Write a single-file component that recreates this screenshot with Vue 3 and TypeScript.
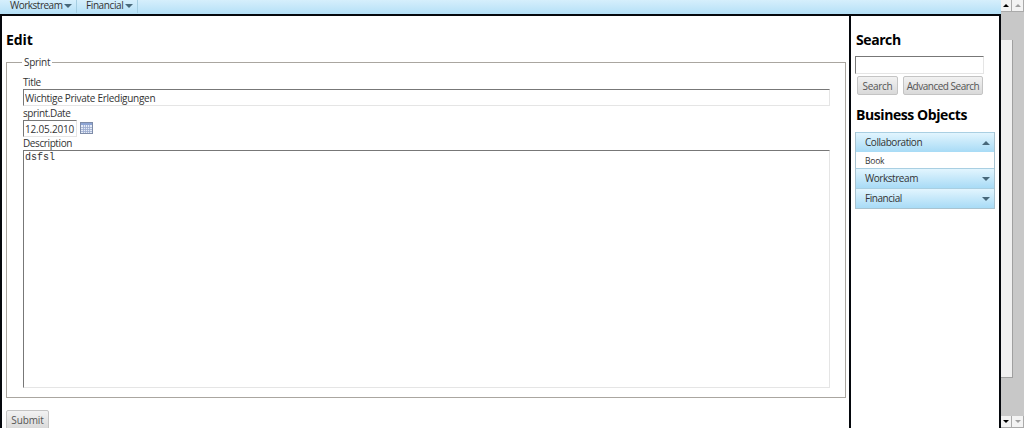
<script setup lang="ts">
import { ref } from 'vue'

interface MenuGroup {
  label: string
  open: boolean
  items: string[]
}

const menu = ['Workstream', 'Financial']

const title = ref('Wichtige Private Erledigungen')
const date = ref('12.05.2010')
const description = ref('dsfsl')
const query = ref('')

const groups = ref<MenuGroup[]>([
  { label: 'Collaboration', open: true, items: ['Book'] },
  { label: 'Workstream', open: false, items: [] },
  { label: 'Financial', open: false, items: [] },
])

function toggle(group: MenuGroup) {
  group.open = !group.open
}
</script>

<template>
  <div class="page">
    <div class="frame">
      <nav class="menubar">
        <a v-for="entry in menu" :key="entry" class="menubar__item">
          <span>{{ entry }}</span>
          <i class="arrow"></i>
        </a>
      </nav>

      <div class="columns">
        <main class="content">
          <h1>Edit</h1>
          <form @submit.prevent>
            <fieldset>
              <legend>Sprint</legend>
              <label for="title">Title</label>
              <input id="title" v-model="title" class="field field--title" type="text" />
              <label for="date" class="label--date">sprint.Date</label>
              <div class="date-row">
                <input id="date" v-model="date" class="field field--date" type="text" />
                <svg class="calendar" width="13" height="12" viewBox="0 0 13 12">
                  <rect x="0.5" y="0.5" width="12" height="11" fill="#e6ecf7" stroke="#7e8ca8" />
                  <rect x="1" y="1" width="11" height="2" fill="#8ea5d4" />
                  <path
                    d="M1 5.5H12M1 7.5H12M1 9.5H12M3.5 3V11M5.5 3V11M7.5 3V11M9.5 3V11"
                    fill="none"
                    stroke="#9aabce"
                    stroke-width="0.8"
                  />
                </svg>
              </div>
              <label for="description" class="label--description">Description</label>
              <textarea id="description" v-model="description" class="field field--text"></textarea>
            </fieldset>
            <button class="button button--submit" type="submit">Submit</button>
          </form>
        </main>

        <aside class="sidebar">
          <h1>Search</h1>
          <input v-model="query" class="field field--search" type="text" />
          <div class="buttons">
            <button class="button button--search" type="button">Search</button>
            <button class="button button--advanced" type="button">Advanced Search</button>
          </div>
          <h1 class="heading--objects">Business Objects</h1>
          <div class="accordion">
            <template v-for="group in groups" :key="group.label">
              <div class="accordion__head" @click="toggle(group)">
                <span>{{ group.label }}</span>
                <i class="arrow" :class="{ 'arrow--up': group.open }"></i>
              </div>
              <template v-if="group.open">
                <div v-for="item in group.items" :key="item" class="accordion__item">{{ item }}</div>
              </template>
            </template>
          </div>
        </aside>
      </div>
    </div>

    <div class="scrollbar scrollbar--inner">
      <div class="scrollbar__button"><i class="tick tick--up"></i></div>
      <div class="scrollbar__track"><div class="scrollbar__thumb"></div></div>
      <div class="scrollbar__button"><i class="tick tick--down"></i></div>
    </div>
    <div class="scrollbar scrollbar--outer">
      <div class="scrollbar__button"><i class="tick tick--up tick--off"></i></div>
      <div class="scrollbar__track"></div>
      <div class="scrollbar__button"><i class="tick tick--down tick--off"></i></div>
    </div>
  </div>
</template>

<style>
body {
  margin: 0;
  overflow: hidden;
}
</style>

<style scoped>
.page,
.page * {
  box-sizing: border-box;
}

.page {
  display: flex;
  width: 1024px;
  height: 428px;
  overflow: hidden;
  background: #fff;
  color: #333;
  font-family: 'Open Sans', 'Noto Sans', sans-serif;
  font-size: 10px;
  letter-spacing: -0.29px;
  line-height: 12px;
}

.frame {
  display: flex;
  flex-direction: column;
  width: 1001px;
}

.menubar {
  display: flex;
  flex: none;
  height: 14px;
  background: linear-gradient(#d6effc, #b4e0f7);
  letter-spacing: -0.5px;
}

.menubar__item {
  display: flex;
  justify-content: space-between;
  height: 13px;
  padding: 0 4px 0 9px;
  border-right: 1px solid #a5cee2;
  line-height: 10px;
}

.menubar__item:nth-child(1) {
  width: 77px;
  padding-left: 10px;
}

.menubar__item:nth-child(2) {
  width: 61px;
  padding-left: 9px;
  letter-spacing: -0.4px;
}

.menubar .arrow {
  margin-top: 4px;
}

.arrow {
  width: 0;
  height: 0;
  border: solid transparent;
  border-width: 4px 4px 0;
  border-top-color: #48687a;
}

.arrow--up {
  border-width: 0 4px 4px;
  border-bottom-color: #48687a;
}

.columns {
  display: flex;
  flex: 1;
  min-height: 0;
  border: solid #05080d;
  border-width: 2px 2px 0;
}

.content {
  width: 847px;
  padding: 16px 4px 0;
}

h1 {
  margin: 0;
  color: #000;
  font-size: 14px;
  font-weight: 700;
  letter-spacing: -0.42px;
  line-height: 16px;
  white-space: nowrap;
}

.content h1 {
  letter-spacing: -0.1px;
}

fieldset {
  display: flow-root;
  width: 839px;
  height: 343px;
  margin: 7px 0 0;
  padding: 8px 15px 0 16px;
  border: 1px solid #aaa6a0;
}

legend {
  height: 14px;
  margin-left: -1px;
  padding: 0 2px;
  line-height: 15px;
}

label {
  display: block;
  height: 12px;
  line-height: 10px;
  letter-spacing: -0.4px;
}

.field {
  display: block;
  margin: 0;
  padding: 0 1px;
  border: 1px solid;
  border-color: #777 #e5e5e5 #e5e5e5 #777;
  border-radius: 0;
  outline: none;
  background: #fff;
  color: #333;
  font: inherit;
  letter-spacing: inherit;
}

.field--title {
  width: 807px;
  height: 17px;
}

.label--date {
  margin-top: 2px;
}

.date-row {
  display: flex;
  align-items: center;
  gap: 3px;
  height: 17px;
}

.field--date {
  width: 54px;
  height: 17px;
  letter-spacing: -0.2px;
}

.calendar {
  position: relative;
  top: -1px;
}

.label--description {
  margin-top: 1px;
}

.field--text {
  width: 807px;
  height: 238px;
  padding-top: 1px;
  font-family: 'Liberation Mono', monospace;
  font-size: 10px;
  letter-spacing: 0;
  resize: none;
}

.button {
  display: block;
  flex: none;
  height: 19px;
  padding: 0;
  border: 1px solid #c4c4c4;
  border-radius: 2px;
  background: linear-gradient(#f2f2f2, #d9d9d9);
  color: #555;
  font: inherit;
  letter-spacing: inherit;
  text-align: center;
  white-space: nowrap;
}

.button--submit {
  width: 43px;
  height: 20px;
  margin-top: 12px;
  letter-spacing: -0.1px;
}

.sidebar {
  width: 150px;
  padding: 16px 4px 0;
  border-left: 2px solid #05080d;
}

.sidebar h1 {
  padding-left: 1px;
}

.field--search {
  width: 129px;
  height: 18px;
  margin-top: 8px;
}

.buttons {
  display: flex;
  gap: 5px;
  margin: 2px 0 0 2px;
}

.button--search {
  width: 41px;
}

.button--advanced {
  width: 80px;
  letter-spacing: -0.5px;
}

.heading--objects {
  margin-top: 12px;
}

.accordion {
  width: 140px;
  margin-top: 9px;
  border: 1px solid #a9c3d0;
  border-top: 0;
}

.accordion__head {
  display: flex;
  align-items: center;
  justify-content: space-between;
  height: 20px;
  padding: 0 4px 0 9px;
  border-top: 1px solid #a9cfe2;
  background: linear-gradient(#e2f5fe, #a8dbf6);
  letter-spacing: -0.45px;
}

.accordion__head span {
  padding-bottom: 2px;
}

.accordion__item {
  height: 16px;
  padding-left: 9px;
  font-size: 8.5px;
  letter-spacing: -0.2px;
  line-height: 17px;
}

.scrollbar {
  display: flex;
  flex-direction: column;
  background: #c8c8c8;
}

.scrollbar--inner {
  width: 11px;
}

.scrollbar--outer {
  width: 12px;
}

.scrollbar__button {
  display: flex;
  align-items: center;
  justify-content: center;
  height: 12px;
  border: solid #aaa;
  border-width: 0 1px 1px 0;
  background: #f3f3f3;
}

.scrollbar__track {
  flex: 1;
  padding-top: 28px;
}

.scrollbar__thumb {
  position: relative;
  width: 12px;
  height: 338px;
  border: solid #a0a0a0;
  border-width: 0 1px 1px 0;
  background: #f0f0f0;
}

.tick {
  border: solid transparent;
}

.tick--up {
  border-width: 0 3px 3px;
  border-bottom-color: #000;
}

.tick--down {
  border-width: 3px 3px 0;
  border-top-color: #000;
}

.tick--off {
  opacity: 0.35;
}
</style>
